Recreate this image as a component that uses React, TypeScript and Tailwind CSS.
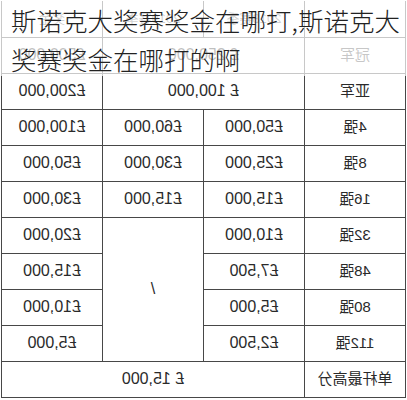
import React from 'react';

const cell = 'border border-[#474747] text-center align-middle p-0';

// rows in natural (un-mirrored) order: label, first column, second, third
const rows: { label: string; a: string; b?: string; c: string }[] = [
  { label: '4强', a: '£50,000', b: '£60,000', c: '£100,000' },
  { label: '8强', a: '£25,000', b: '£30,000', c: '£50,000' },
  { label: '16强', a: '£15,000', b: '£15,000', c: '£30,000' },
];

const lower = [
  { label: '32强', a: '£10,000', c: '£20,000' },
  { label: '48强', a: '£7,500', c: '£15,000' },
  { label: '80强', a: '£5,000', c: '£10,000' },
  { label: '112强', a: '£2,500', c: '£5,000' },
];

export default function App() {
  return (
    <div className="relative w-[407px] h-[400px] overflow-hidden bg-white">
      {/* the table picture is mirrored left-to-right */}
      <div className="-scale-x-100 pt-px">
        <table
          className="w-[405px] ml-px table-fixed border-collapse text-[16px] text-[#2a2a2a]"
          style={{ fontFamily: '"Liberation Sans", "Noto Sans CJK SC", sans-serif' }}
        >
          <tbody>
            <tr className="h-[36px] text-[13px] text-[#666]">
              <td className={`${cell} border-t-0`}></td>
              <td className={`${cell} border-t-0`}>2018赛季</td>
              <td className={`${cell} border-t-0`}>2019赛季</td>
              <td className={`${cell} border-t-0`}>奖金</td>
            </tr>
            <tr className="h-[36px]">
              <td className={`${cell} text-[15px] text-[#444]`}>冠军</td>
              <td className={cell} colSpan={2}>£ 250,000</td>
              <td className={cell}>£500,000</td>
            </tr>
            <tr className="h-[36px]">
              <td className={`${cell} text-[15px]`}>亚军</td>
              <td className={cell} colSpan={2}>£ 100,000</td>
              <td className={cell}>£200,000</td>
            </tr>
            {rows.map((r) => (
              <tr key={r.label} className="h-[36px]">
                <td className={`${cell} text-[15px]`}>{r.label}</td>
                <td className={cell}>{r.a}</td>
                <td className={cell}>{r.b}</td>
                <td className={cell}>{r.c}</td>
              </tr>
            ))}
            {lower.map((r, i) => (
              <tr key={r.label} className="h-[36px]">
                <td className={`${cell} text-[15px]`}>{r.label}</td>
                <td className={cell}>{r.a}</td>
                {i === 0 && (
                  <td className={cell} rowSpan={4}>
                    /
                  </td>
                )}
                <td className={cell}>{r.c}</td>
              </tr>
            ))}
            <tr className="h-[36px]">
              <td className={`${cell} text-[15px]`}>单杆最高分</td>
              <td className={cell} colSpan={3}>£ 15,000</td>
            </tr>
          </tbody>
        </table>
      </div>

      {/* title laid over the top of the table */}
      <div
        className="absolute top-0 left-0 right-0 h-[76px] bg-white/70 pl-[11px] text-[25.5px] font-light leading-[39px] text-[#222] whitespace-nowrap"
        style={{ fontFamily: '"Noto Sans CJK SC", "Noto Sans", sans-serif' }}
      >
        <div>斯诺克大奖赛奖金在哪打,斯诺克大</div>
        <div>奖赛奖金在哪打的啊</div>
      </div>
    </div>
  );
}
